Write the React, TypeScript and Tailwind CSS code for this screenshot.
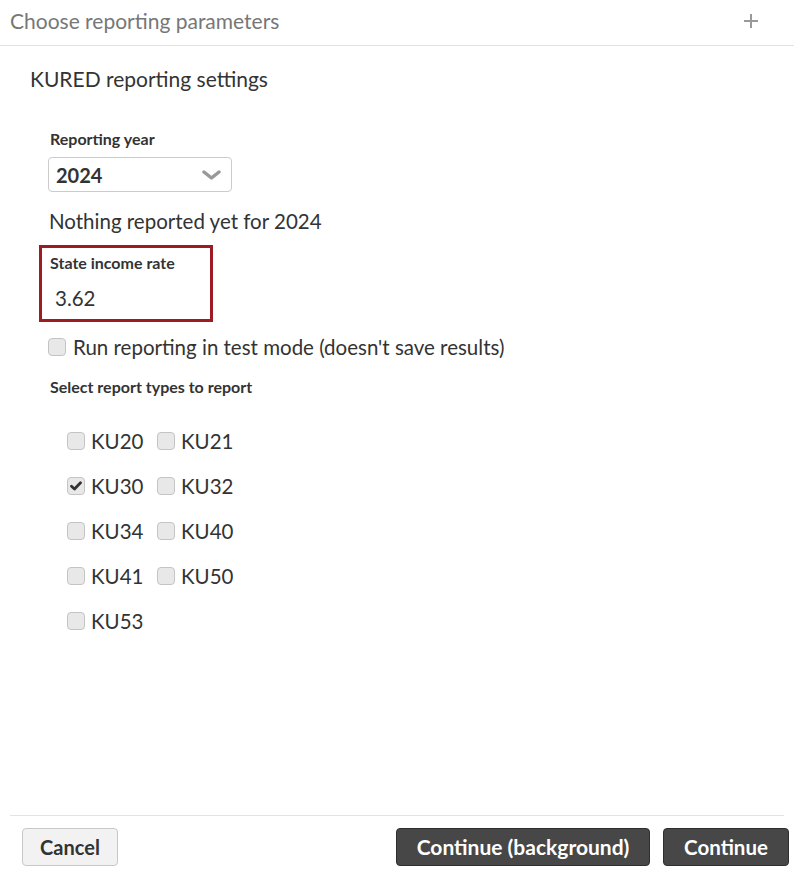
import { useState } from "react";

const REPORT_TYPES = [
  ["KU20", "KU21"],
  ["KU30", "KU32"],
  ["KU34", "KU40"],
  ["KU41", "KU50"],
  ["KU53"],
];

function Box({ checked, onClick }: { checked: boolean; onClick: () => void }) {
  return (
    <span
      onClick={onClick}
      className="flex h-[18px] w-[18px] shrink-0 items-center justify-center rounded-[4px] border border-[#c4c4c4] bg-[#e8e8e8]"
    >
      {checked && (
        <svg width="12" height="10" viewBox="0 0 12 10">
          <path d="M1.5 5.2 L4.5 8 L10.5 1.8" fill="none" stroke="#333" strokeWidth="2.8" strokeLinecap="round" strokeLinejoin="round" />
        </svg>
      )}
    </span>
  );
}

export default function App() {
  const [picked, setPicked] = useState<string[]>(["KU30"]);
  const [testMode, setTestMode] = useState(false);

  const toggle = (code: string) =>
    setPicked((p) => (p.includes(code) ? p.filter((c) => c !== code) : [...p, code]));

  return (
    <div className="flex h-[878px] w-[794px] flex-col bg-white text-[#333] font-['Lato',sans-serif]">
      <header className="flex h-[46px] items-center justify-between border-b border-[#e3e3e3] pb-[4px] pl-[10px] pr-[36px]">
        <span className="text-[21px] leading-[28px] text-[#777]">Choose reporting parameters</span>
        <svg width="14" height="14" viewBox="0 0 14 14">
          <path d="M7 0 V14 M0 7 H14" stroke="#999" strokeWidth="2" />
        </svg>
      </header>

      <main className="flex-1 pl-[30px]">
        <h2 className="mt-[19px] text-[21px] leading-[28px]">KURED reporting settings</h2>

        <div className="mt-[36px] pl-[18px]">
          <label className="block pl-[2px] text-[16px] font-bold leading-[19px]">Reporting year</label>
          <div className="mt-[9px] flex h-[35px] w-[184px] items-center justify-between rounded-[4px] border border-[#ccc] pl-[7px] pr-[10px]">
            <span className="text-[20px] font-bold">2024</span>
            <svg width="19" height="10" viewBox="0 0 19 10">
              <path d="M2 2 L9.5 8 L17 2" fill="none" stroke="#999" strokeWidth="3.5" strokeLinecap="round" strokeLinejoin="round" />
            </svg>
          </div>

          <p className="mt-[15px] pl-[1px] text-[20.5px] leading-[28px]">Nothing reported yet for 2024</p>
        </div>

        <div className="ml-[9px] mt-[10px] h-[77px] w-[174px] border-[3px] border-[#9c1c22] pl-[8px] pt-[5px]">
          <label className="block text-[16px] font-bold leading-[19px]">State income rate</label>
          <div className="mt-[14px] pl-[5px] text-[20.5px] leading-[24px]">3.62</div>
        </div>

        <div className="mt-[12px] flex items-center gap-[7px] pl-[18px]">
          <Box checked={testMode} onClick={() => setTestMode(!testMode)} />
          <span className="text-[20.5px] leading-[26px]">Run reporting in test mode (doesn't save results)</span>
        </div>

        <label className="mt-[17px] block pl-[20px] text-[16px] font-bold leading-[19px]">
          Select report types to report
        </label>

        <div className="mt-[32px] flex flex-col gap-[19px] pl-[37px]">
          {REPORT_TYPES.map((row) => (
            <div key={row[0]} className="flex h-[26px] items-center">
              {row.map((code) => (
                <div key={code} className="flex w-[90px] items-center gap-[6px]">
                  <Box checked={picked.includes(code)} onClick={() => toggle(code)} />
                  <span className="text-[20.5px] leading-[26px]">{code}</span>
                </div>
              ))}
            </div>
          ))}
        </div>
      </main>

      <footer className="mx-[10px] flex h-[63px] items-start justify-between border-t border-[#e3e3e3] pl-[12px] pt-[12px]">
        <button className="h-[38px] w-[96px] rounded-[4px] border border-[#c8c8c8] bg-[#f2f2f2] text-[20px] font-bold text-[#333]">
          Cancel
        </button>
        <div className="-mr-[5px] flex gap-[13px]">
          <button className="h-[38px] w-[254px] rounded-[4px] border border-[#2e2e2e] bg-[#474747] text-[21px] font-bold text-white">
            Continue (background)
          </button>
          <button className="h-[38px] w-[126px] rounded-[4px] border border-[#2e2e2e] bg-[#474747] text-[20.5px] font-bold text-white">
            Continue
          </button>
        </div>
      </footer>
    </div>
  );
}
